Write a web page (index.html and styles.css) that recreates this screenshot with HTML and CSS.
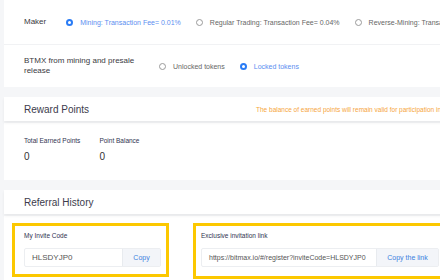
FILE: index.html
```html
<!DOCTYPE html>
<html lang="en">
<head>
  <meta charset="UTF-8" />
  <title>Referral</title>
  <link rel="stylesheet" href="styles.css">
</head>
<body>
  <div class="page">
    <section class="card settings">
      <div class="setting-row first">
        <div class="setting-label">Maker</div>
        <div class="options">
          <label class="option checked"><span class="radio"></span>Mining: Transaction Fee= 0.01%</label>
          <label class="option"><span class="radio"></span>Regular Trading: Transaction Fee= 0.04%</label>
          <label class="option"><span class="radio"></span>Reverse-Mining: Transaction Fee= 0.04%</label>
        </div>
      </div>
      <div class="setting-row">
        <div class="setting-label">BTMX from mining and presale release</div>
        <div class="options">
          <label class="option"><span class="radio"></span>Unlocked tokens</label>
          <label class="option checked"><span class="radio"></span>Locked tokens</label>
        </div>
      </div>
    </section>

    <section class="block">
      <div class="block-head">
        <h3>Reward Points</h3>
        <p class="note">The balance of earned points will remain valid for participation in future events.</p>
      </div>
      <div class="block-body stats">
        <div class="stat">
          <div class="stat-label">Total Earned Points</div>
          <div class="stat-value">0</div>
        </div>
        <div class="stat">
          <div class="stat-label">Point Balance</div>
          <div class="stat-value">0</div>
        </div>
      </div>
    </section>

    <section class="block">
      <div class="block-head">
        <h3>Referral History</h3>
      </div>
      <div class="block-body invites">
        <div class="invite-box code-box">
          <div class="invite-label">My Invite Code</div>
          <div class="copy-field">
            <span class="copy-value code">HLSDYJP0</span>
            <button class="copy-btn code-btn">Copy</button>
          </div>
        </div>
        <div class="invite-box link-box">
          <div class="invite-label">Exclusive invitation link</div>
          <div class="copy-field">
            <span class="copy-value">https://bitmax.io/#/register?inviteCode=HLSDYJP0</span>
            <button class="copy-btn link-btn">Copy the link</button>
          </div>
        </div>
      </div>
    </section>
  </div>
</body>
</html>
```

FILE: styles.css
```css
/* Base */
* {
  box-sizing: border-box;
  margin: 0;
  padding: 0;
}
body {
  font-family: 'Liberation Sans', Arial, sans-serif;
  background: #f5f6f8;
  overflow: hidden;
}
.page {
  width: 720px;
  padding-left: 4px;
}
/* Settings card */
.card {
  background: #fff;
}
.setting-row {
  display: flex;
  align-items: center;
  height: 42px;
  padding-left: 20px;
}
.setting-row.first {
  height: 45px;
  border-bottom: 1px solid #f1f2f4;
}
.setting-label {
  max-width: 115px;
  margin-right: 20px;
  font-size: 8px;
  line-height: 10px;
  color: #3a3a42;
}
.options {
  display: flex;
  gap: 15px;
}
.option {
  display: flex;
  align-items: center;
  gap: 7px;
  font-size: 7px;
  color: #666;
  white-space: nowrap;
}
.radio {
  width: 7px;
  height: 7px;
  border: 1px solid #9a9a9a;
  border-radius: 50%;
  background: #fff;
}
.option.checked {
  color: #5b8ef0;
}
.option.checked .radio {
  border: 2.5px solid #2a7cf5;
}
/* Blocks */
.block {
  margin-top: 10px;
}
.block-head {
  position: relative;
  z-index: 1;
  display: flex;
  align-items: center;
  height: 24px;
  padding-left: 20px;
  background: #fff;
  box-shadow: 0 2px 3px rgba(0, 0, 0, 0.06);
}
.block-head h3 {
  font-size: 10px;
  font-weight: normal;
  color: #3c3b4c;
}
.note {
  margin-left: 167px;
  font-size: 6.5px;
  color: #f6a53c;
  white-space: nowrap;
}
.block-body {
  margin-top: 2px;
  background: #fff;
}
/* Stats */
.stats {
  display: flex;
  gap: 19px;
  padding: 14px 20px 17px;
}
.stat-label {
  font-size: 6.5px;
  line-height: 8px;
  color: #2f3350;
}
.stat-value {
  margin-top: 6px;
  font-size: 10px;
  line-height: 12px;
  color: #333;
}
/* Invites */
.invites {
  display: flex;
  gap: 24px;
  padding: 7px 0 0 8px;
  height: 70px;
}
.invite-box {
  border: 3px solid #fcc800;
  padding: 6px 5px 7px 9px;
  height: 54px;
}
.code-box {
  width: 157px;
}
.link-box {
  width: 254px;
  padding-left: 5px;
  height: 56px;
}
.invite-label {
  font-size: 6.5px;
  line-height: 8px;
  color: #2f3350;
  margin-bottom: 8px;
}
.copy-field {
  display: flex;
  height: 19px;
  border: 1px solid #eceef1;
  border-radius: 2px;
  background: #fff;
}
.copy-value {
  flex: 1;
  display: flex;
  align-items: center;
  padding-left: 7px;
  font-size: 7px;
  color: #555;
  white-space: nowrap;
}
.copy-value.code {
  padding-left: 7px;
  font-size: 8px;
}
.copy-btn {
  border: none;
  border-left: 1px solid #e8ebef;
  background: #f3f5f9;
  color: #3b7fe0;
  font-family: inherit;
  font-size: 7px;
}
.code-btn {
  width: 38px;
}
.link-btn {
  width: 62px;
}
```
